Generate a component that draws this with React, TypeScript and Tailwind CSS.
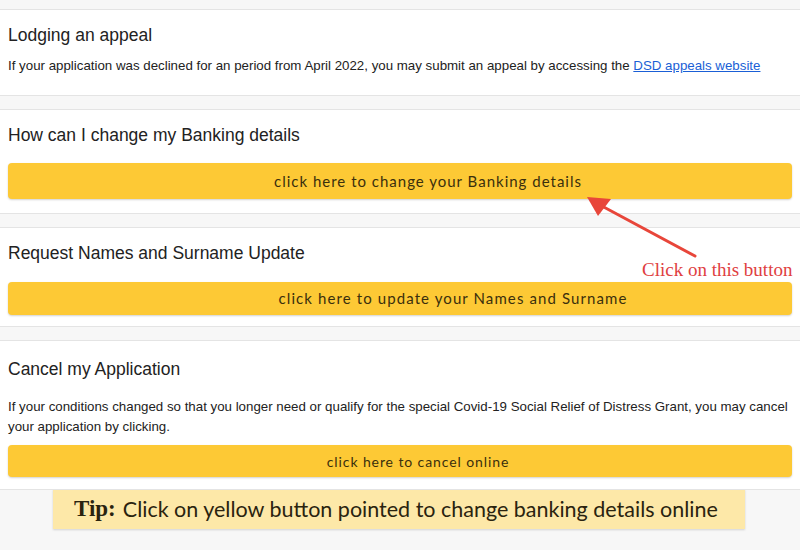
const sans = { fontFamily: '"Liberation Sans", Arial, sans-serif' };

function ActionButton({ label, className }: { label: string; className: string }) {
  return (
    <button
      className={`w-full rounded-[4px] bg-[#fdc935] shadow-[0_1px_2px_rgba(0,0,0,0.18)] text-[#3a2f0d] ${className}`}
      style={{ fontFamily: "Lato, sans-serif" }}
    >
      {label}
    </button>
  );
}

export default function App() {
  return (
    <div className="relative w-[800px] h-[550px] overflow-hidden bg-[#f7f7f7] pt-[9px]" style={sans}>
      <div className="flex flex-col gap-[13px]">
        {/* Lodging an appeal */}
        <section className="h-[87px] bg-white border-y border-[#e4e4e4] px-2 pt-[14px]">
          <h2 className="text-[17.5px] text-[#222] leading-[22px]">Lodging an appeal</h2>
          <p className="mt-[10px] text-[13.3px] text-[#222]">
            If your application was declined for an period from April 2022, you may submit an appeal by accessing the{" "}
            <a href="#" className="text-[#1a5fd6] underline">
              DSD appeals website
            </a>
          </p>
        </section>

        {/* Banking details */}
        <section className="h-[105px] bg-white border-y border-[#e4e4e4] px-2 pt-[14px]">
          <h2 className="text-[17.5px] text-[#222] leading-[22px]">How can I change my Banking details</h2>
          <div className="mt-[17px]">
            <ActionButton
              label="click here to change your Banking details"
              className="h-[36px] pl-[56px] text-[15px] tracking-[1px]"
            />
          </div>
        </section>

        {/* Names and surname */}
        <section className="h-[100px] bg-white border-y border-[#e4e4e4] px-2 pt-[14px]">
          <h2 className="text-[17.5px] text-[#222] leading-[22px]">Request Names and Surname Update</h2>
          <div className="mt-[18px]">
            <ActionButton
              label="click here to update your Names and Surname"
              className="h-[33px] pl-[106px] text-[15px] tracking-[1.1px]"
            />
          </div>
        </section>

        {/* Cancel */}
        <section className="h-[150px] bg-white border-y border-[#e4e4e4] px-2 pt-[17px]">
          <h2 className="text-[17.5px] text-[#222] leading-[22px]">Cancel my Application</h2>
          <p className="mt-[17px] text-[13.3px] leading-[20px] text-[#222]">
            If your conditions changed so that you longer need or qualify for the special Covid-19 Social Relief of Distress Grant, you may cancel your application by clicking.
          </p>
          <div className="mt-[8px]">
            <ActionButton
              label="click here to cancel online"
              className="h-[32px] pl-[36px] text-[14px] tracking-[0.9px]"
            />
          </div>
        </section>
      </div>

      {/* Tip */}
      <div className="ml-[53px] w-[692px] h-[40px] -mt-[1px] bg-[#fde8a8] shadow-[0_1px_2px_rgba(0,0,0,0.15)] flex items-center pl-[21px] text-[#2a230f]">
        <span className="text-[23px] font-bold mr-[7px]" style={{ fontFamily: '"Liberation Serif", serif' }}>
          Tip:
        </span>
        <span className="text-[21.5px]" style={{ fontFamily: "Lato, sans-serif" }}>
          Click on yellow button pointed to change banking details online
        </span>
      </div>

      {/* Annotation */}
      <svg className="absolute left-0 top-0 pointer-events-none" width="800" height="550">
        <line x1="695" y1="256" x2="600" y2="205" stroke="#e8463a" strokeWidth="3" strokeLinecap="round" />
        <polygon points="587,197 611,199 598,216" fill="#e8463a" />
      </svg>
      <div
        className="absolute left-[642px] top-[258px] text-[19px] text-[#e0403f] leading-[24px]"
        style={{ fontFamily: '"Liberation Serif", serif' }}
      >
        Click on this button
      </div>
    </div>
  );
}
